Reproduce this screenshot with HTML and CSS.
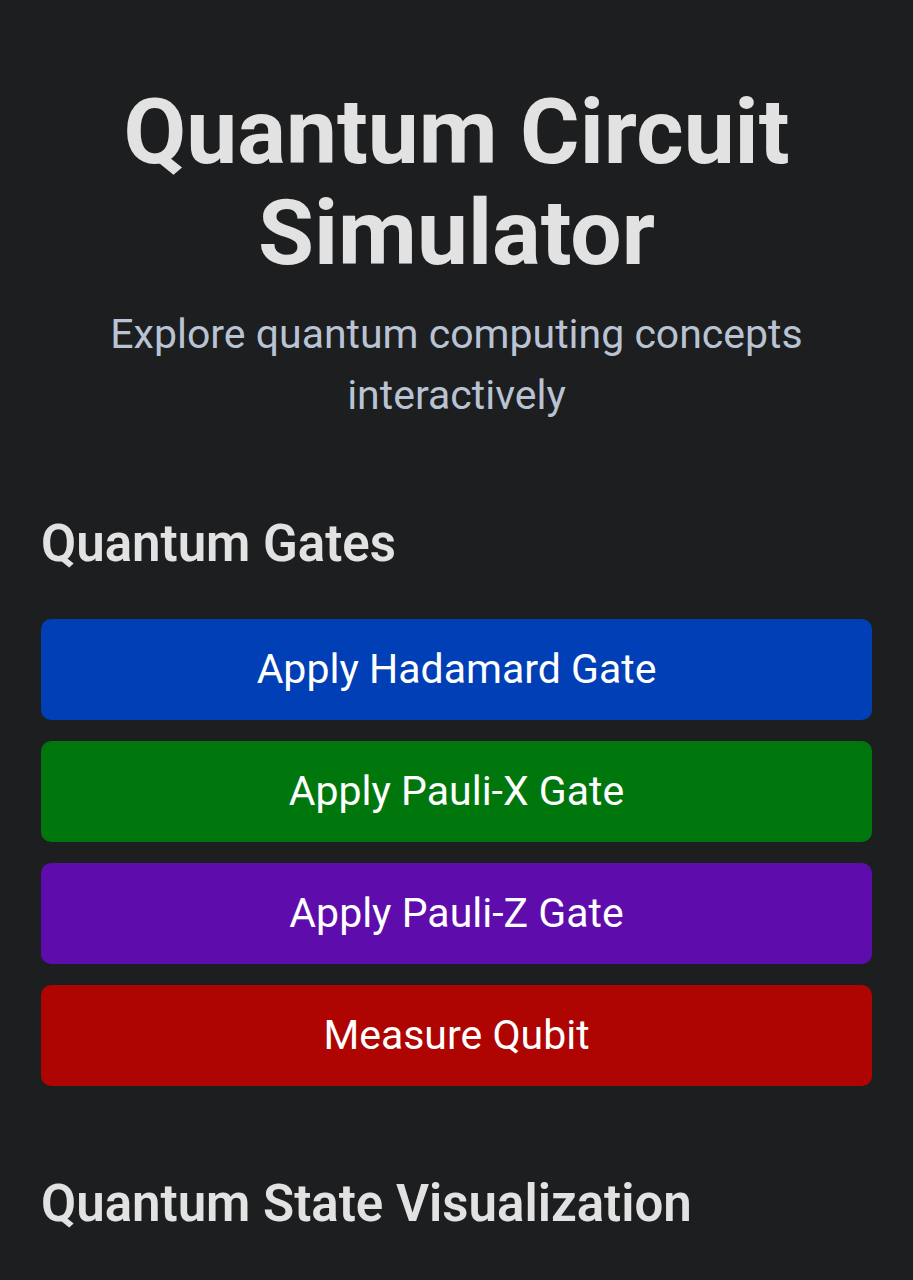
FILE: index.html
```html
<!DOCTYPE html>
<html lang="en">
<head>
<meta charset="utf-8">
<meta name="viewport" content="width=device-width, initial-scale=1">
<title>Quantum Circuit Simulator</title>
<link rel="stylesheet" href="styles.css">
</head>
<body>
<main class="page">
  <header class="hero">
    <h1 class="title">Quantum Circuit Simulator</h1>
    <p class="subtitle">Explore quantum computing concepts interactively</p>
  </header>
  <section class="section">
    <h2 class="heading">Quantum Gates</h2>
    <div class="gates">
      <button class="gate gate-hadamard" type="button">Apply Hadamard Gate</button>
      <button class="gate gate-x" type="button">Apply Pauli-X Gate</button>
      <button class="gate gate-z" type="button">Apply Pauli-Z Gate</button>
      <button class="gate gate-measure" type="button">Measure Qubit</button>
    </div>
  </section>
  <section class="section">
    <h2 class="heading">Quantum State Visualization</h2>
  </section>
</main>
</body>
</html>
```

FILE: styles.css
```css
* {
  box-sizing: border-box;
}

body {
  margin: 0;
  background: #1c1e1f;
  color: #e2e2e3;
  font-family: Roboto, "Liberation Sans", sans-serif;
}

.page {
  display: flex;
  flex-direction: column;
  gap: 82px;
  padding: 82px 41px 0;
}

.hero {
  display: flex;
  flex-direction: column;
  gap: 20px;
  padding: 0 41px;
  text-align: center;
}

.title {
  margin: 0;
  font-size: 91px;
  font-weight: 700;
  line-height: 101px;
}

.subtitle {
  margin: 0;
  color: #b9c3d3;
  font-size: 41px;
  line-height: 61px;
}

.section {
  display: flex;
  flex-direction: column;
  gap: 40px;
}

.heading {
  margin: 0;
  font-size: 51px;
  font-weight: 600;
  line-height: 71px;
}

.gates {
  display: flex;
  flex-direction: column;
  gap: 21px;
}

.gate {
  width: 100%;
  padding: 20px;
  border: 0;
  border-radius: 10px;
  color: #fff;
  font-family: inherit;
  font-size: 41px;
  line-height: 61px;
  cursor: pointer;
}

.gate-hadamard {
  background: #003fb5;
}

.gate-x {
  background: #00770d;
}

.gate-z {
  background: #5e0dac;
}

.gate-measure {
  background: #ae0402;
}
```
